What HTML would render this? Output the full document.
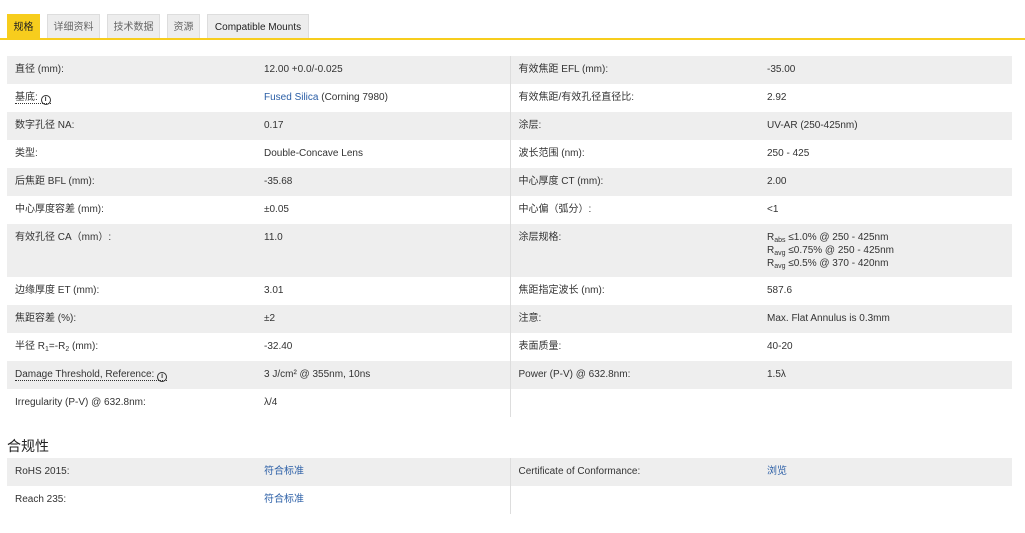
<!DOCTYPE html>
<html><head><meta charset="utf-8"><style>
body{margin:0;background:#fff;font-family:"Liberation Sans","Noto Sans CJK SC",sans-serif;font-size:10px;color:#333;width:1025px;height:533px;overflow:hidden;position:relative}
.tabs{position:absolute;top:14px;left:7px;height:25px}
.tab{position:absolute;top:0;height:24px;line-height:26px;background:#ededed;border:1px solid #ddd;border-bottom:none;color:#666;text-align:center;box-sizing:border-box}
.tab.a{background:#f7cd1d;border-color:#f7cd1d;color:#222}
.line{position:absolute;top:38px;left:0;width:1025px;height:2px;background:#f7cd1d}
table{position:absolute;left:7px;border-collapse:collapse;width:1005px;table-layout:fixed}
td{padding:0 8px;height:28px;line-height:14px;vertical-align:baseline;padding-top:7px;box-sizing:border-box;color:#333}
tr.g td{background:#eeeeee}
td.c3{border-left:1px solid #ddd}
a{color:#2a5ea6;text-decoration:none}
.dot{border-bottom:1px dotted #333}
.i{display:inline-block;width:8px;height:8px;border:1.5px solid #333;border-radius:50%;font-size:7px;line-height:8px;text-align:center;font-weight:bold;vertical-align:-1px}
h3{position:absolute;top:436px;left:7px;margin:0;font-size:14px;font-weight:normal;color:#222}
sub{font-size:7px;line-height:0;vertical-align:-2px}
tr.t td{height:53px}
</style></head><body>
<div class="tabs">
<div class="tab a" style="left:0;width:33px">规格</div>
<div class="tab" style="left:40px;width:53px">详细资料</div>
<div class="tab" style="left:100px;width:53px">技术数据</div>
<div class="tab" style="left:160px;width:33px">资源</div>
<div class="tab" style="left:200px;width:102px;color:#222">Compatible Mounts</div>
</div>
<div class="line"></div>
<table style="top:56px">
<col style="width:249px"><col style="width:254px"><col style="width:249px"><col>
<tr class="g"><td>直径 (mm):</td><td>12.00 +0.0/-0.025</td><td class="c3">有效焦距 EFL (mm):</td><td>-35.00</td></tr>
<tr><td><span class="dot">基底: <span class="i">i</span></span></td><td><a>Fused Silica</a> (Corning 7980)</td><td class="c3">有效焦距/有效孔径直径比:</td><td>2.92</td></tr>
<tr class="g"><td>数字孔径 NA:</td><td>0.17</td><td class="c3">涂层:</td><td>UV-AR (250-425nm)</td></tr>
<tr><td>类型:</td><td>Double-Concave Lens</td><td class="c3">波长范围 (nm):</td><td>250 - 425</td></tr>
<tr class="g"><td>后焦距 BFL (mm):</td><td>-35.68</td><td class="c3">中心厚度 CT (mm):</td><td>2.00</td></tr>
<tr><td>中心厚度容差 (mm):</td><td>±0.05</td><td class="c3">中心偏（弧分）:</td><td>&lt;1</td></tr>
<tr class="g t"><td>有效孔径 CA（mm）:</td><td>11.0</td><td class="c3">涂层规格:</td><td style="line-height:13px">R<sub>abs</sub> ≤1.0% @ 250 - 425nm<br>R<sub>avg</sub> ≤0.75% @ 250 - 425nm<br>R<sub>avg</sub> ≤0.5% @ 370 - 420nm</td></tr>
<tr><td>边缘厚度 ET (mm):</td><td>3.01</td><td class="c3">焦距指定波长 (nm):</td><td>587.6</td></tr>
<tr class="g"><td>焦距容差 (%):</td><td>±2</td><td class="c3">注意:</td><td>Max. Flat Annulus is 0.3mm</td></tr>
<tr><td>半径 R<sub>1</sub>=-R<sub>2</sub> (mm):</td><td>-32.40</td><td class="c3">表面质量:</td><td>40-20</td></tr>
<tr class="g"><td><span class="dot">Damage Threshold, Reference: <span class="i">i</span></span></td><td>3 J/cm² @ 355nm, 10ns</td><td class="c3">Power (P-V) @ 632.8nm:</td><td>1.5λ</td></tr>
<tr><td>Irregularity (P-V) @ 632.8nm:</td><td>λ/4</td><td class="c3"></td><td></td></tr>
</table>
<h3>合规性</h3>
<table style="top:458px">
<col style="width:249px"><col style="width:254px"><col style="width:249px"><col>
<tr class="g"><td>RoHS 2015:</td><td><a>符合标准</a></td><td class="c3">Certificate of Conformance:</td><td><a>浏览</a></td></tr>
<tr><td>Reach 235:</td><td><a>符合标准</a></td><td class="c3"></td><td></td></tr>
</table>
</body></html>
